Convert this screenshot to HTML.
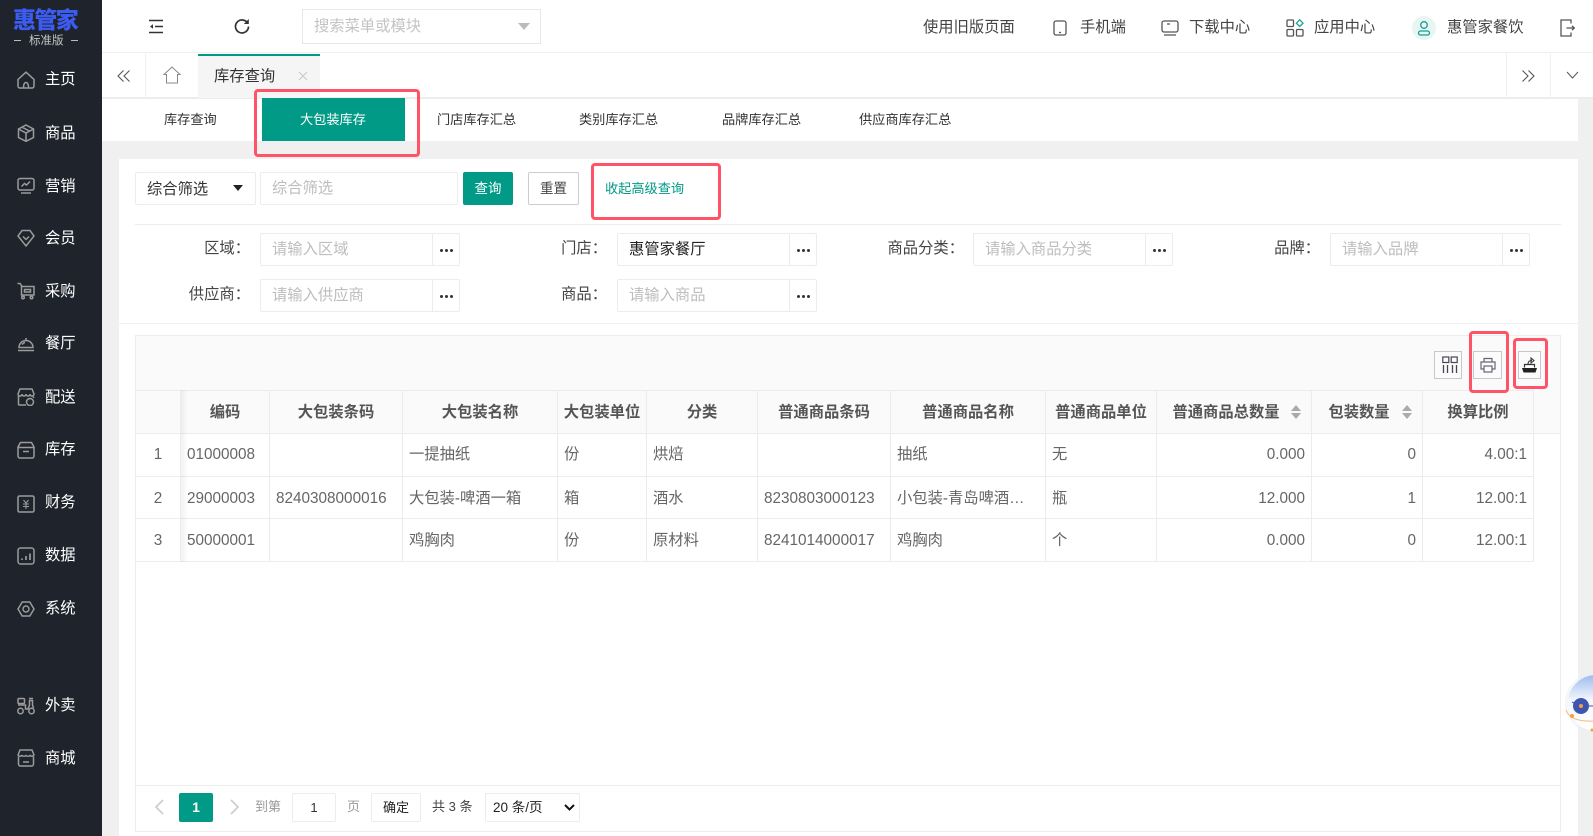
<!DOCTYPE html>
<html lang="zh-CN"><head><meta charset="utf-8"><title>库存查询</title>
<style>
*{box-sizing:border-box}
html,body{margin:0;padding:0;width:1593px;height:836px;overflow:hidden;background:#f0f0f0;font-family:"Liberation Sans","Noto Sans CJK SC",sans-serif;color:#333}
.a{position:absolute;white-space:nowrap}
.t{position:absolute;white-space:nowrap;line-height:20px;height:20px;font-size:15.3px;margin-top:1px}
#side{position:absolute;left:0;top:0;width:102px;height:836px;background:#1f232c}
#side .t{left:45px;color:#fff}
#side svg{position:absolute;left:17px;width:18px;height:18px;fill:none;stroke:#9b9b9b;stroke-width:1.5}
.box{position:absolute;background:#fff;border:1px solid #ececec;border-radius:2px;height:33px}
.ph{color:#bdbdbd}
.dots{position:absolute;width:27px;height:31px;border-left:1px solid #ececec;top:0;right:0;text-align:center;font-weight:bold;font-size:12px;line-height:32px;color:#333;letter-spacing:0}
.dots i{display:inline-block;width:3px;height:3px;border-radius:50%;background:#333;margin:0 1px;vertical-align:middle}
.lab{text-align:right;color:#444}
.red{position:absolute;border:3px solid #ff5468;border-radius:4px;background:transparent}
table{position:absolute;left:135px;top:390px;border-collapse:collapse;table-layout:fixed;font-size:15.3px;line-height:20px;color:#666;width:1398px}
th,td{border:1px solid #ececec;padding:2px 6px 0;white-space:nowrap;overflow:hidden}
th{background:#fafafa;font-weight:700;color:#555;height:43px;text-align:center;padding:1px 2px 0;position:relative}
th.s{padding-right:18px}
td.r{text-align:right}
td.c{text-align:center}
tr.f td{padding:0 6px}
.sort{position:absolute;right:10px;top:14px;width:10px;height:14px}
.tool{position:absolute;top:351px;height:28px;border:1px solid #c8c8c8;background:#fbfbfb}
</style></head><body>

<div id="side">
  <div class="a" style="left:13px;top:5px;font-size:23px;font-weight:900;color:#3c5bf0;line-height:30px;letter-spacing:-1.6px;width:68px">惠管家</div>
  <div class="a" style="left:29px;top:33px;font-size:11.5px;color:#c6c6c6;line-height:16px;width:36px">标准版</div>
  <div class="a" style="left:14px;top:40px;width:7px;height:1px;background:#bbb"></div>
  <div class="a" style="left:71px;top:40px;width:7px;height:1px;background:#bbb"></div>

  <svg style="top:71px" viewBox="0 0 18 18"><path d="M1 8.500 9 1.200l8 7.300V15a2 2 0 0 1-2 2H3a2 2 0 0 1-2-2zM6.500 17c0-4 1-5.500 2.500-5.500S11.500 13 11.500 17"/></svg><div class="t" style="top:69px">主页</div>
  <svg style="top:124px" viewBox="0 0 18 18"><path d="M9 1l7.500 4v8.500L9 17.300 1.500 13.500V5zM1.500 5 9 9l7.500-4M9 9v8M5 3.200 12.500 7"/></svg><div class="t" style="top:123px">商品</div>
  <svg style="top:177px" viewBox="0 0 18 18"><rect x="1" y="1.500" width="16" height="11.500" rx="2"/><path d="M4.500 9.500 7.500 6.500 9.500 8 13 4.500M4 16h10"/></svg><div class="t" style="top:176px">营销</div>
  <svg style="top:229px" viewBox="0 0 18 18"><path d="M5 1.500h8L17 7l-8 10L1 7zM6 7.500l3 3 3-3"/></svg><div class="t" style="top:228px">会员</div>
  <svg style="top:282px" viewBox="0 0 18 18"><path d="M.5 1.500h2.500l1.500 2V13h12.500V4.500H4.500M7.500 7.500h6v2.500h-6z"/><circle cx="6" cy="15.500" r="1.300"/><circle cx="14.500" cy="15.500" r="1.300"/></svg><div class="t" style="top:281px">采购</div>
  <svg style="top:334px" viewBox="0 0 18 18"><path d="M1 16.500h16M2 13.500h14a7 7 0 0 0-14 0zM9 6.500v-2.500M5 10.500c.8-1 1.800-1.800 3-2.100"/></svg><div class="t" style="top:333px">餐厅</div>
  <svg style="top:388px" viewBox="0 0 18 18"><path d="M3 1h12l2 5a2 2 0 0 1-4 0 2 2 0 0 1-4 0 2 2 0 0 1-4 0 2 2 0 0 1-4 0zM1.500 7.500V16a1 1 0 0 0 1 1H9M16.500 8.500V10"/><circle cx="13" cy="14" r="3.500"/></svg><div class="t" style="top:387px">配送</div>
  <svg style="top:441px" viewBox="0 0 18 18"><path d="M3.500 1.500h11L17 6v9a2 2 0 0 1-2 2H3a2 2 0 0 1-2-2V6zM1 6.500h16M6 10.500h6"/></svg><div class="t" style="top:439px">库存</div>
  <svg style="top:495px" viewBox="0 0 18 18"><rect x="1" y="1" width="16" height="16" rx="1.500"/><path d="M6.500 5 9 8l2.500-3M6 9h6M6 11.500h6M9 8v6" stroke-width="1.100"/></svg><div class="t" style="top:492px">财务</div>
  <svg style="top:547px" viewBox="0 0 18 18"><rect x="1" y="1" width="16" height="16" rx="2.500"/><path d="M5 13v-1.500M9 13V9M13 13V6.500" stroke-width="1.700"/></svg><div class="t" style="top:545px">数据</div>
  <svg style="top:600px" viewBox="0 0 18 18"><path d="M5.200 2h7.600L17 9l-4.200 7H5.200L1 9z"/><circle cx="9" cy="9" r="3"/></svg><div class="t" style="top:598px">系统</div>
  <svg style="top:697px" viewBox="0 0 18 18"><rect x="1" y="1.500" width="6.500" height="5" rx="1"/><path d="M1 8h7.500v4h2.500l1.500-4V3.500h3V8l1 3M12 1.500h4"/><circle cx="3.500" cy="14" r="2.700"/><circle cx="14.500" cy="14" r="2.700"/></svg><div class="t" style="top:695px">外卖</div>
  <svg style="top:749px" viewBox="0 0 18 18"><path d="M3 1h12l2 5a2.700 2.700 0 0 1-4 .5 3 3 0 0 1-4 0 3 3 0 0 1-4 0A2.700 2.700 0 0 1 1 6zM1.500 7.500V15a2 2 0 0 0 2 2h11a2 2 0 0 0 2-2V7.500M6 13h6"/></svg><div class="t" style="top:748px">商城</div>
</div>

<!-- top bar -->
<div class="a" style="left:102px;top:0;width:1491px;height:53px;background:#fff;border-bottom:1px solid #f0f0f0"></div>
<svg class="a" style="left:148px;top:19px" width="16" height="15" viewBox="0 0 16 15" fill="none" stroke="#333" stroke-width="1.500"><path d="M1 1.500h14M7 7.500h8M1 13.500h14"/><path d="M5 5.200 2 7.500l3 2.300z" fill="#333" stroke="none"/></svg>
<svg class="a" style="left:234px;top:18px" width="16" height="16" viewBox="0 0 16 16" fill="none" stroke="#333" stroke-width="1.700"><path d="M13.800 5.500A6.500 6.500 0 1 0 14.500 8.500"/><path d="M14.800 1v5h-5z" fill="#333" stroke="none"/></svg>
<div class="a" style="left:302px;top:9px;width:239px;height:35px;border:1px solid #e8e8e8;background:#fff"></div>
<div class="t ph" style="left:314px;top:16px;color:#c4c4c4">搜索菜单或模块</div>
<div class="a" style="left:518px;top:23px;border-left:6px solid transparent;border-right:6px solid transparent;border-top:7px solid #bbb"></div>
<div class="t" style="left:923px;top:17px;color:#444">使用旧版页面</div>
<svg class="a" style="left:1053px;top:20px" width="14" height="16" viewBox="0 0 14 16" fill="none" stroke="#555" stroke-width="1.300"><rect x="1" y="1" width="12" height="14" rx="2"/><path d="M6 12.500h2"/></svg>
<div class="t" style="left:1080px;top:17px;color:#444">手机端</div>
<svg class="a" style="left:1161px;top:20px" width="18" height="16" viewBox="0 0 18 16" fill="none" stroke="#555" stroke-width="1.300"><rect x="1" y="1" width="16" height="11" rx="2"/><path d="M3 15h12M6 4h3"/></svg>
<div class="t" style="left:1189px;top:17px;color:#444">下载中心</div>
<svg class="a" style="left:1286px;top:19px" width="18" height="18" viewBox="0 0 18 18" fill="none" stroke="#555" stroke-width="1.300"><rect x="1" y="1" width="6.500" height="6.500" rx="1"/><rect x="1" y="10.500" width="6.500" height="6.500" rx="1"/><rect x="10.500" y="10.500" width="6.500" height="6.500" rx="1"/><path d="M13.700.8 17 4.200l-3.300 3.300-3.300-3.300z" stroke="#1aa391"/></svg>
<div class="t" style="left:1314px;top:17px;color:#444">应用中心</div>
<div class="a" style="left:1412px;top:16px;width:24px;height:24px;border-radius:50%;background:#e7f5f3"></div>
<svg class="a" style="left:1417px;top:20px" width="14" height="16" viewBox="0 0 14 16" fill="none" stroke="#16a08e" stroke-width="1.300"><circle cx="7" cy="5" r="3.300"/><rect x="1.500" y="11" width="11" height="4" rx="2"/></svg>
<div class="t" style="left:1447px;top:17px;color:#444">惠管家餐饮</div>
<svg class="a" style="left:1560px;top:19px" width="15" height="18" viewBox="0 0 15 18" fill="none" stroke="#555" stroke-width="1.300"><path d="M11 4.500V1H1v16h10v-3.500M6.500 9H14M12 6.800 14.300 9 12 11.200"/></svg>

<!-- tab bar -->
<div class="a" style="left:102px;top:53px;width:1491px;height:46px;background:#fff;border-bottom:2px solid #ececec"></div>
<div class="a" style="left:145px;top:53px;width:1px;height:45px;background:#f0f0f0"></div>
<svg class="a" style="left:117px;top:69px" width="14" height="14" viewBox="0 0 14 14" fill="none" stroke="#555" stroke-width="1.100"><path d="M6.500 1.500 1 7l5.500 5.500M12.500 1.500 7 7l5.500 5.500"/></svg>
<svg class="a" style="left:163px;top:66px" width="18" height="18" viewBox="0 0 18 18" fill="none" stroke="#888" stroke-width="1"><path d="M9 1 1 8.500h2.500V17h11V8.500H17z"/></svg>
<div class="a" style="left:198px;top:54px;width:122px;height:44px;background:#f5f5f5;border-top:2px solid #009a87"></div>
<div class="t" style="left:214px;top:66px;color:#333">库存查询</div>
<svg class="a" style="left:298px;top:71px" width="10" height="10" viewBox="0 0 10 10" stroke="#c8c8c8" stroke-width="1"><path d="M1 1l8 8M9 1l-8 8"/></svg>
<div class="a" style="left:1506px;top:53px;width:1px;height:45px;background:#f0f0f0"></div>
<div class="a" style="left:1550px;top:53px;width:1px;height:45px;background:#f0f0f0"></div>
<svg class="a" style="left:1521px;top:69px" width="14" height="14" viewBox="0 0 14 14" fill="none" stroke="#555" stroke-width="1.100"><path d="M1.500 1.500 7 7l-5.500 5.500M7.500 1.500 13 7l-5.500 5.500"/></svg>
<svg class="a" style="left:1566px;top:71px" width="13" height="9" viewBox="0 0 13 9" fill="none" stroke="#555" stroke-width="1"><path d="M1 1l5.500 6L12 1"/></svg>

<!-- subtabs -->
<div class="a" style="left:102px;top:99px;width:1476px;height:42px;background:#fff"></div>
<div class="a" style="left:262px;top:98px;width:143px;height:43px;background:#009a87"></div>
<div class="t" style="left:164px;top:109px;font-size:13.2px">库存查询</div>
<div class="t" style="left:300px;top:109px;font-size:13.2px;color:#fff">大包装库存</div>
<div class="t" style="left:437px;top:109px;font-size:13.2px">门店库存汇总</div>
<div class="t" style="left:579px;top:109px;font-size:13.2px">类别库存汇总</div>
<div class="t" style="left:722px;top:109px;font-size:13.2px">品牌库存汇总</div>
<div class="t" style="left:859px;top:109px;font-size:13.2px">供应商库存汇总</div>

<!-- panel -->
<div class="a" style="left:119px;top:159px;width:1459px;height:677px;background:#fff"></div>

<div class="box" style="left:135px;top:172px;width:121px"></div>
<div class="t" style="left:147px;top:179px;color:#333">综合筛选</div>
<div class="a" style="left:233px;top:185px;border-left:5.500px solid transparent;border-right:5.500px solid transparent;border-top:6px solid #222"></div>
<div class="box" style="left:260px;top:172px;width:198px"></div>
<div class="t ph" style="left:272px;top:178px">综合筛选</div>
<div class="a" style="left:463px;top:172px;width:50px;height:33px;background:#009a87;border-radius:2px;color:#fff;font-size:13.5px;line-height:33px;text-align:center">查询</div>
<div class="a" style="left:528px;top:172px;width:51px;height:33px;background:#fff;border:1px solid #ccc;border-radius:2px;color:#444;font-size:13.5px;line-height:31px;text-align:center">重置</div>
<div class="t" style="left:605px;top:178px;font-size:13.2px;color:#009a87">收起高级查询</div>

<div class="a" style="left:135px;top:224px;width:1426px;height:1px;background:#ececec"></div>

<div class="t lab" style="left:188px;top:238px;width:62px">区域：</div>
<div class="box" style="left:260px;top:233px;width:200px"><div class="dots"><i></i><i></i><i></i></div></div>
<div class="t ph" style="left:272px;top:239px">请输入区域</div>
<div class="t lab" style="left:545px;top:238px;width:62px">门店：</div>
<div class="box" style="left:617px;top:233px;width:200px"><div class="dots"><i></i><i></i><i></i></div></div>
<div class="t" style="left:629px;top:239px;color:#222">惠管家餐厅</div>
<div class="t lab" style="left:868px;top:238px;width:96px">商品分类：</div>
<div class="box" style="left:973px;top:233px;width:200px"><div class="dots"><i></i><i></i><i></i></div></div>
<div class="t ph" style="left:985px;top:239px">请输入商品分类</div>
<div class="t lab" style="left:1258px;top:238px;width:62px">品牌：</div>
<div class="box" style="left:1330px;top:233px;width:200px"><div class="dots"><i></i><i></i><i></i></div></div>
<div class="t ph" style="left:1342px;top:239px">请输入品牌</div>

<div class="t lab" style="left:178px;top:284px;width:72px">供应商：</div>
<div class="box" style="left:260px;top:279px;width:200px"><div class="dots"><i></i><i></i><i></i></div></div>
<div class="t ph" style="left:272px;top:285px">请输入供应商</div>
<div class="t lab" style="left:545px;top:284px;width:62px">商品：</div>
<div class="box" style="left:617px;top:279px;width:200px"><div class="dots"><i></i><i></i><i></i></div></div>
<div class="t ph" style="left:629px;top:285px">请输入商品</div>

<div class="a" style="left:119px;top:323px;width:1459px;height:1px;background:#f0f0f0"></div>

<!-- grid frame -->
<div class="a" style="left:135px;top:335px;width:1426px;height:497px;border:1px solid #ececec;background:#fff"></div>
<div class="a" style="left:136px;top:336px;width:1424px;height:98px;background:#fafafa;border-bottom:1px solid #ececec"></div>

<div class="tool" style="left:1434px;width:28px"></div>
<svg class="a" style="left:1442px;top:356px" width="16" height="18" viewBox="0 0 16 18" fill="none" stroke="#445" stroke-width="1.200"><rect x=".8" y="1" width="6" height="5.500"/><rect x="9.200" y="1" width="6" height="5.500"/><path d="M1.500 9v8M5.500 9v8M10.500 9v8M14.500 9v8" stroke-width="1.300"/></svg>
<div class="tool" style="left:1473px;width:29px"></div>
<svg class="a" style="left:1480px;top:357px" width="16" height="16" viewBox="0 0 16 16" fill="none" stroke="#667" stroke-width="1.200"><path d="M4 5V1.500h8V5M4 12H1V5h14v7h-3"/><rect x="4" y="9" width="8" height="6"/></svg>
<div class="tool" style="left:1518px;width:23px"></div>
<svg class="a" style="left:1521px;top:357px" width="17" height="16" viewBox="0 0 17 16"><path d="M1 11H16L14.500 15.500H2.500z" fill="#222"/><path d="M3.500 10.500V7.500h10v3" fill="#fff" stroke="#333" stroke-width="1.200"/><path d="M7 7c0-2.500 1.500-3.500 4-3.500M10 1l3 2.500L10 6z" fill="none" stroke="#333" stroke-width="1.100"/></svg>

<table>
<colgroup><col style="width:45px"><col style="width:89px"><col style="width:133px"><col style="width:155px"><col style="width:89px"><col style="width:111px"><col style="width:133px"><col style="width:155px"><col style="width:111px"><col style="width:155px"><col style="width:111px"><col style="width:111px"></colgroup>
<tr><th></th><th>编码</th><th>大包装条码</th><th>大包装名称</th><th>大包装单位</th><th>分类</th><th>普通商品条码</th><th>普通商品名称</th><th>普通商品单位</th><th class="s">普通商品总数量<svg class="sort" viewBox="0 0 10 14"><path d="M5 0l5 6H0zM0 8h10l-5 6z" fill="#aaa"/></svg></th><th class="s">包装数量<svg class="sort" viewBox="0 0 10 14"><path d="M5 0l5 6H0zM0 8h10l-5 6z" fill="#aaa"/></svg></th><th>换算比例</th></tr>
<tr class="f" style="height:43px"><td class="c">1</td><td>01000008</td><td></td><td>一提抽纸</td><td>份</td><td>烘焙</td><td></td><td>抽纸</td><td>无</td><td class="r">0.000</td><td class="r">0</td><td class="r">4.00:1</td></tr>
<tr style="height:42px"><td class="c">2</td><td>29000003</td><td>8240308000016</td><td>大包装-啤酒一箱</td><td>箱</td><td>酒水</td><td>8230803000123</td><td>小包装-青岛啤酒…</td><td>瓶</td><td class="r">12.000</td><td class="r">1</td><td class="r">12.00:1</td></tr>
<tr style="height:43px"><td class="c">3</td><td>50000001</td><td></td><td>鸡胸肉</td><td>份</td><td>原材料</td><td>8241014000017</td><td>鸡胸肉</td><td>个</td><td class="r">0.000</td><td class="r">0</td><td class="r">12.00:1</td></tr>
</table>
<div class="a" style="left:181px;top:390px;width:7px;height:172px;background:linear-gradient(90deg,rgba(0,0,0,.05),rgba(0,0,0,0))"></div>

<!-- pagination -->
<div class="a" style="left:136px;top:785px;width:1424px;height:1px;background:#ececec"></div>
<svg class="a" style="left:154px;top:799px" width="10" height="16" viewBox="0 0 10 16" fill="none" stroke="#ccc" stroke-width="1.600"><path d="M9 1 2 8l7 7"/></svg>
<div class="a" style="left:179px;top:793px;width:34px;height:29px;background:#009a87;border-radius:2px;color:#fff;font-size:14px;font-weight:bold;text-align:center;line-height:28px">1</div>
<svg class="a" style="left:230px;top:799px" width="10" height="16" viewBox="0 0 10 16" fill="none" stroke="#ccc" stroke-width="1.600"><path d="M1 1l7 7-7 7"/></svg>
<div class="t" style="left:255px;top:796px;font-size:13px;color:#999">到第</div>
<div class="a" style="left:292px;top:793px;width:44px;height:29px;border:1px solid #ececec;border-radius:2px;font-size:13px;color:#333;text-align:center;line-height:27px">1</div>
<div class="t" style="left:347px;top:796px;font-size:13px;color:#999">页</div>
<div class="a" style="left:371px;top:793px;width:50px;height:29px;border:1px solid #ececec;border-radius:2px;font-size:13px;color:#222;text-align:center;line-height:27px">确定</div>
<div class="t" style="left:432px;top:796px;font-size:13px;color:#444">共 3 条</div>
<div class="a" style="left:485px;top:793px;width:95px;height:29px;border:1px solid #ececec;border-radius:2px;font-size:13.5px;color:#222;line-height:28px;padding-left:7px">20 条/页</div>
<svg class="a" style="left:564px;top:804px" width="11" height="8" viewBox="0 0 11 8" fill="none" stroke="#111" stroke-width="2"><path d="M1 1l4.500 4.500L10 1"/></svg>

<!-- floating robot -->
<svg class="a" style="left:1560px;top:670px" width="33" height="70" viewBox="0 0 33 70">
<defs><linearGradient id="g" x1="0" y1="0" x2="0" y2="1"><stop offset="0" stop-color="#9dbcef"/><stop offset=".45" stop-color="#f4f7fd"/><stop offset="1" stop-color="#fff"/></linearGradient></defs>
<circle cx="35" cy="33" r="30" fill="#e8edf7" opacity=".5"/>
<circle cx="36" cy="33" r="28" fill="url(#g)"/>
<circle cx="21" cy="36" r="8" fill="#3f56b0"/><circle cx="21" cy="36" r="2" fill="#f5a040"/>
<path d="M12 32l4 2M29 36h6" stroke="#3f56b0" stroke-width="1"/>
<path d="M6 40c3 9 14 12 30 11" fill="none" stroke="#f8b878" stroke-width="1"/>
<circle cx="12" cy="46" r="2" fill="#f5a040"/><circle cx="32" cy="60" r="1.500" fill="#f5a040"/>
</svg>

<!-- red annotations -->
<div class="red" style="left:254px;top:89px;width:166px;height:68px"></div>
<div class="red" style="left:591px;top:163px;width:130px;height:57px"></div>
<div class="red" style="left:1469px;top:331px;width:40px;height:62px"></div>
<div class="red" style="left:1513px;top:338px;width:35px;height:51px"></div>
</body></html>
